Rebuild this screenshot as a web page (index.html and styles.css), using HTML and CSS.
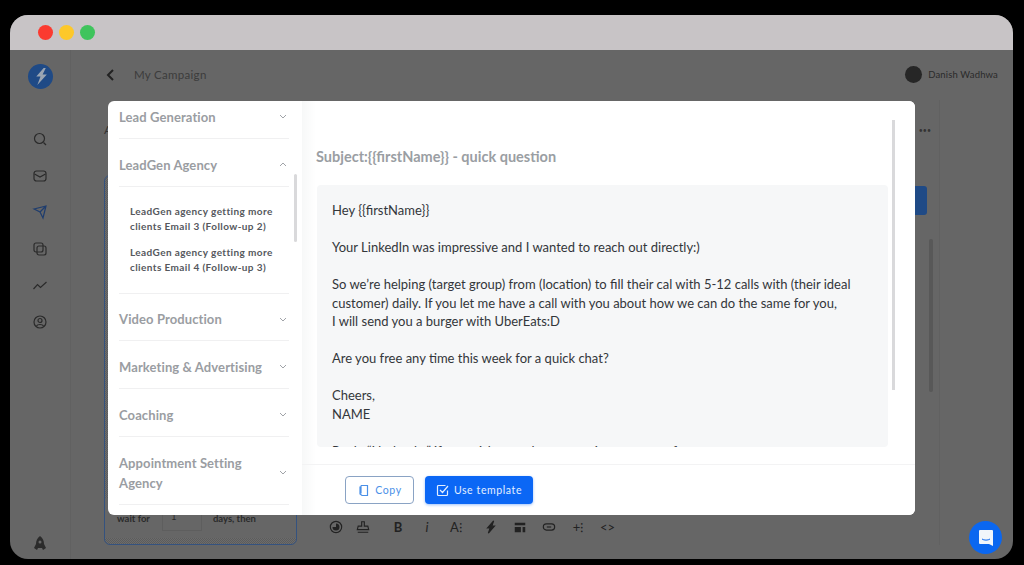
FILE: index.html
```html
<!DOCTYPE html>
<html lang="en">

<head>
  <meta charset="UTF-8" />
  <title>My Campaign</title>
  <link rel="stylesheet" href="styles.css">
</head>

<body>
  <div class="window">
    <div class="titlebar">
      <span class="light red"></span>
      <span class="light yellow"></span>
      <span class="light green"></span>
    </div>

    <div class="app">
      <nav class="sidebar">
        <div class="logo">
          <svg width="17" height="19" viewBox="0 0 16 18"><path d="M11 1 4 9h4L5 17l9-10h-4l3-6z" fill="#9aa5b3" /></svg>
        </div>
        <svg class="nav-icon first" viewBox="0 0 16 16"><circle cx="7.5" cy="7.5" r="5" /><path d="m11.5 11.5 2.5 2.5" /></svg>
        <svg class="nav-icon" viewBox="0 0 16 16"><rect x="2" y="3" width="12" height="10" rx="2.5" /><path d="m2.5 6 5.5 3 5.5-3" /></svg>
        <svg class="nav-icon active" viewBox="0 0 16 16"><path d="M2 5 14 2l-3 12-3-6zM8 8l6-6" /></svg>
        <svg class="nav-icon" viewBox="0 0 16 16"><rect x="2" y="2" width="9" height="9" rx="2" /><rect x="5" y="5" width="9" height="9" rx="2" /></svg>
        <svg class="nav-icon" viewBox="0 0 16 16"><path d="m1.5 12 4-4.5 3 3L14.5 5" /></svg>
        <svg class="nav-icon" viewBox="0 0 16 16"><circle cx="8" cy="8" r="6" /><circle cx="8" cy="6.5" r="2" /><path d="M4.5 12c1-2 6-2 7 0" /></svg>
        <svg class="nav-rocket" viewBox="0 0 12 14"><path d="M6 0c3 2 4 5 4 8l2 4-3 2-1-2H4l-1 2-3-2 2-4c0-3 1-6 4-8z" fill="#2b2b2b" /><circle cx="6" cy="6" r="1.5" fill="#666" /></svg>
      </nav>

      <main class="main">
        <header class="topbar">
          <svg class="back" width="10" height="14" viewBox="0 0 10 14"><path d="M8 2 3 7l5 5" /></svg>
          <span class="campaign">My Campaign</span>
          <span class="avatar"></span>
          <span class="username">Danish Wadhwa</span>
        </header>

        <div class="workspace">
          <div class="steps">
            <div class="steps-label">A</div>
            <div class="step-card">
              <div class="wait-row">
                <span>wait for</span>
                <span class="wait-input">1</span>
                <span>days, then</span>
              </div>
            </div>
          </div>

          <div class="editor">
            <div class="dots">•••</div>
            <div class="send-row"><span class="send-btn"></span></div>
            <div class="editor-scroll"></div>
            <div class="toolbar">
              <svg viewBox="0 0 16 16"><circle cx="8" cy="8" r="6.5" /><path d="M8 4a4 4 0 1 1-4 4h4z" fill="#222" stroke="none" /></svg>
              <svg class="stamp" viewBox="0 0 16 16"><path d="M6.5 2h3v5h4l1 4h-13l1-4h4zM2 14h12" /></svg>
              <b class="tool-text wide">B</b>
              <i class="tool-text">i</i>
              <span class="tool-text">A⁝</span>
              <svg class="bolt" viewBox="0 0 16 16"><path d="M11 1 4 9h3l-2 6 7-8H9z" fill="#222" /></svg>
              <svg viewBox="0 0 16 16"><path d="M2 3h12v3H2zM2 8h7v6H2zM11 8h3v6h-3z" fill="#222" stroke="none" /></svg>
              <svg viewBox="0 0 16 16"><rect x="1.5" y="4.5" width="13" height="7" rx="3.5" /><path d="M5.5 8h5" /></svg>
              <span class="tool-text">+⁝</span>
              <span class="tool-text">&lt;&gt;</span>
            </div>
          </div>
        </div>
      </main>
    </div>

    <div class="modal">
      <aside class="categories">
        <div class="cat">
          <span>Lead Generation</span>
          <svg class="chev" viewBox="0 0 8 5"><path d="m1 1 3 3 3-3" /></svg>
        </div>
        <div class="cat">
          <span>LeadGen Agency</span>
          <svg class="chev" viewBox="0 0 8 5"><path d="m1 4 3-3 3 3" /></svg>
        </div>
        <div class="subs">
          <p>LeadGen agency getting more clients Email 3 (Follow-up 2)</p>
          <p>LeadGen agency getting more clients Email 4 (Follow-up 3)</p>
        </div>
        <div class="cat short">
          <span>Video Production</span>
          <svg class="chev" viewBox="0 0 8 5"><path d="m1 1 3 3 3-3" /></svg>
        </div>
        <div class="cat">
          <span>Marketing &amp; Advertising</span>
          <svg class="chev" viewBox="0 0 8 5"><path d="m1 1 3 3 3-3" /></svg>
        </div>
        <div class="cat">
          <span>Coaching</span>
          <svg class="chev" viewBox="0 0 8 5"><path d="m1 1 3 3 3-3" /></svg>
        </div>
        <div class="cat tall">
          <span>Appointment Setting Agency</span>
          <svg class="chev" viewBox="0 0 8 5"><path d="m1 1 3 3 3-3" /></svg>
        </div>
        <div class="cat-scroll"></div>
      </aside>

      <section class="preview">
        <div class="preview-top">
          <h2 class="subject">Subject:{{firstName}} - quick question</h2>
          <div class="body-text">
            <p>Hey {{firstName}}</p>
            <p>Your LinkedIn was impressive and I wanted to reach out directly:)</p>
            <p>So we’re helping (target group) from (location) to fill their cal with 5-12 calls with (their ideal<br>
              customer) daily. If you let me have a call with you about how we can do the same for you,<br>
              I will send you a burger with UberEats:D</p>
            <p>Are you free any time this week for a quick chat?</p>
            <p>Cheers,<br>NAME</p>
            <p>Reply “Nothanks” if you wish to no longer receive messages from me</p>
          </div>
          <div class="preview-scroll"></div>
        </div>
        <div class="actions">
          <button class="btn-copy">
            <svg width="13" height="13" viewBox="0 0 13 13"><path d="M4 1.5h6.5v10H5L3 10V2.5M4 1.5v8" /></svg>
            Copy
          </button>
          <button class="btn-use">
            <svg width="13" height="13" viewBox="0 0 13 13"><path d="M11.5 6.5v4a1 1 0 0 1-1 1h-8a1 1 0 0 1-1-1v-8a1 1 0 0 1 1-1h7M4 6l2.5 2.5L12 2" /></svg>
            Use template
          </button>
        </div>
      </section>
    </div>

    <div class="chat-bubble">
      <svg width="16" height="18" viewBox="0 0 16 18"><path d="M2 1h12a1 1 0 0 1 1 1v15l-4-2H2a1 1 0 0 1-1-1V2a1 1 0 0 1 1-1z" fill="#f2f6fb" /><path d="M4 10c2 1.5 6 1.5 8 0" stroke="#0b67f0" fill="none" /></svg>
    </div>
  </div>
</body>

</html>
```

FILE: styles.css
```css
* {
  box-sizing: border-box;
}

body {
  margin: 0;
  height: 565px;
  padding: 15px 11px 6px 10px;
  background-color: #000;
  font-family: Lato, 'Open Sans', sans-serif;
  overflow: hidden;
}

p {
  margin: 0;
}

.window {
  position: relative;
  height: 544px;
  display: flex;
  flex-direction: column;
  border-radius: 18px;
  background-color: #666;
  overflow: hidden;
}

.titlebar {
  height: 35px;
  flex: none;
  display: flex;
  align-items: center;
  gap: 6px;
  padding-left: 28px;
  background-color: #c8c4c6;
}

.light {
  width: 15px;
  height: 15px;
  border-radius: 50%;
}

.red {
  background-color: #fb3a30;
}

.yellow {
  background-color: #fdc82a;
}

.green {
  background-color: #3fc45c;
}

.app {
  flex: 1;
  display: flex;
  min-height: 0;
}

.sidebar {
  width: 61px;
  flex: none;
  display: flex;
  flex-direction: column;
  align-items: center;
  padding-top: 14px;
  border-right: 1px solid #616161;
}

.logo {
  width: 25px;
  height: 25px;
  border-radius: 50%;
  background-color: #1f4a86;
  display: flex;
  align-items: center;
  justify-content: center;
}

.nav-icon {
  width: 16px;
  height: 16px;
  flex: none;
  margin-bottom: 20.5px;
  fill: none;
  stroke: #2a2a2a;
  stroke-width: 1.2;
}

.nav-icon.first {
  margin-top: 42px;
}

.nav-icon.active {
  stroke: #1f3d6e;
}

.nav-rocket {
  width: 12px;
  height: 14px;
  margin-top: auto;
  margin-bottom: 9px;
}

.main {
  flex: 1;
  display: flex;
  flex-direction: column;
  min-width: 0;
}

.topbar {
  height: 50px;
  flex: none;
  display: flex;
  align-items: center;
  padding: 0 15px 1px 34px;
}

.back {
  fill: none;
  stroke: #222;
  stroke-width: 2;
}

.campaign {
  margin-left: 19px;
  font-size: 11.5px;
  letter-spacing: 0.3px;
  color: #3c3c3c;
}

.avatar {
  width: 17px;
  height: 17px;
  margin-left: auto;
  border-radius: 50%;
  background-color: #262626;
}

.username {
  margin-left: 6px;
  font-size: 9.5px;
  letter-spacing: 0.15px;
  color: #2a2a2a;
}

.workspace {
  flex: 1;
  display: flex;
  padding: 0 73px 14px 33px;
  min-height: 0;
}

.steps {
  width: 193px;
  flex: none;
  display: flex;
  flex-direction: column;
}

.steps-label {
  height: 75px;
  padding-top: 22px;
  font-size: 12px;
  color: #333;
}

.step-card {
  flex: 1;
  display: flex;
  flex-direction: column;
  justify-content: flex-end;
  border: 1.5px solid #34527f;
  border-radius: 6px;
  background: repeating-conic-gradient(#5c5c5c 0 25%, #6c6c6c 0 50%) 0 0 / 2px 2px;
}

.wait-row {
  display: flex;
  align-items: center;
  height: 40px;
  margin-bottom: 6px;
  padding-left: 12px;
  font-size: 9.5px;
  font-weight: 700;
  color: #2b2b2b;
  background-color: #666;
}

.wait-input {
  width: 40px;
  height: 26px;
  margin: 0 11px 0 12px;
  padding: 5px 0 0 8px;
  font-weight: 400;
  border: 1px solid #5e5e5e;
}

.editor {
  flex: 1;
  display: flex;
  flex-direction: column;
  margin-left: 25px;
  padding-right: 6px;
  min-width: 0;
  border-right: 1px solid #616161;
}

.dots {
  height: 56px;
  padding: 26px 2px 0 0;
  text-align: right;
  font-size: 7px;
  color: #333;
}

.send-row {
  height: 56px;
  padding-top: 30px;
  display: flex;
  justify-content: flex-end;
}

.send-btn {
  width: 14px;
  height: 29px;
  margin-right: 6px;
  background-color: #1f4a86;
  border-radius: 0 3px 3px 0;
  flex: none;
}

.editor-scroll {
  width: 4px;
  height: 153px;
  margin: 27px 0 0 auto;
  background-color: #585858;
  border-radius: 2px;
}

.toolbar {
  margin-top: auto;
  height: 36px;
  display: flex;
  align-items: center;
  gap: 15px;
  padding-left: 7px;
  color: #222;
}

.toolbar svg {
  width: 14px;
  height: 14px;
  fill: none;
  stroke: #222;
  stroke-width: 1.3;
}

.toolbar .stamp {
  margin-left: -2px;
}

.toolbar .bolt {
  margin-left: 6px;
}

.tool-text {
  width: 14px;
  font-size: 13px;
  text-align: center;
}

.tool-text.wide {
  margin-left: 6px;
}

.modal {
  position: absolute;
  left: 98px;
  top: 86px;
  width: 807px;
  height: 414px;
  display: flex;
  background-color: #fff;
  border-radius: 6px;
  overflow: hidden;
}

.categories {
  position: relative;
  width: 194px;
  flex: none;
  padding: 0 13px 0 11px;
  overflow: hidden;
}

.cat {
  height: 48px;
  display: flex;
  align-items: center;
  justify-content: space-between;
  padding: 4px 2px 0 0;
  font-size: 13px;
  font-weight: 700;
  letter-spacing: 0.1px;
  color: #9a9da2;
  border-bottom: 1px solid #f0f0f1;
}

.cat:first-child {
  height: 38px;
  padding: 0 2px 6px 0;
}

.cat.short {
  height: 47px;
}

.cat.tall {
  height: 68px;
  line-height: 20px;
}

.cat.tall span {
  width: 140px;
}

.chev {
  width: 8px;
  height: 5px;
  flex: none;
  fill: none;
  stroke: #a0a3a8;
  stroke-width: 1;
}

.subs {
  height: 107px;
  padding: 17px 0 0 11px;
  border-bottom: 1px solid #f0f0f1;
}

.subs p {
  width: 156px;
  margin-bottom: 11px;
  font-size: 10px;
  font-weight: 700;
  line-height: 15px;
  letter-spacing: 0.4px;
  color: #55585d;
}

.cat-scroll {
  position: absolute;
  left: 186px;
  top: 73px;
  width: 3px;
  height: 68px;
  background-color: #d9d9db;
  border-radius: 2px;
}

.preview {
  flex: 1;
  display: flex;
  flex-direction: column;
  min-width: 0;
  background: linear-gradient(90deg, #f7f8f8, #fff 14px);
}

.preview-top {
  position: relative;
  height: 364px;
  padding: 46px 27px 0 14px;
  border-bottom: 1px solid #f3f3f4;
  overflow: hidden;
}

.subject {
  margin: 0 0 19px;
  height: 19px;
  font-size: 14.5px;
  font-weight: 700;
  line-height: 19px;
  color: #9a9ea3;
}

.body-text {
  height: 262px;
  margin-left: 1px;
  padding: 16px 15px 0;
  font-size: 13px;
  line-height: 18.5px;
  color: #33363a;
  background-color: #f6f7f8;
  border-radius: 4px;
  overflow: hidden;
}

.body-text p {
  margin-bottom: 18.5px;
}

.preview-scroll {
  position: absolute;
  left: 590px;
  top: 19px;
  width: 3px;
  height: 270px;
  background-color: #d9d9db;
}

.actions {
  display: flex;
  gap: 11px;
  padding: 11px 0 0 43px;
}

.actions button {
  height: 28px;
  display: flex;
  align-items: center;
  justify-content: center;
  gap: 5px;
  border-radius: 4px;
  font-family: inherit;
  font-size: 10.5px;
  letter-spacing: 0.6px;
}

.actions svg {
  fill: none;
  stroke: currentColor;
  stroke-width: 1.2;
}

.btn-copy {
  width: 69px;
  color: #4a90e8;
  background-color: #fff;
  border: 1px solid #8aa3c4;
}

.btn-use {
  width: 108px;
  color: #e4efff;
  background-color: #0b67f5;
  border: none;
  box-shadow: 0 1px 3px rgba(11, 103, 245, 0.4);
}

.chat-bubble {
  position: absolute;
  left: 959px;
  top: 506px;
  width: 33px;
  height: 33px;
  display: flex;
  align-items: center;
  justify-content: center;
  border-radius: 50%;
  background-color: #0b67f0;
}
```
